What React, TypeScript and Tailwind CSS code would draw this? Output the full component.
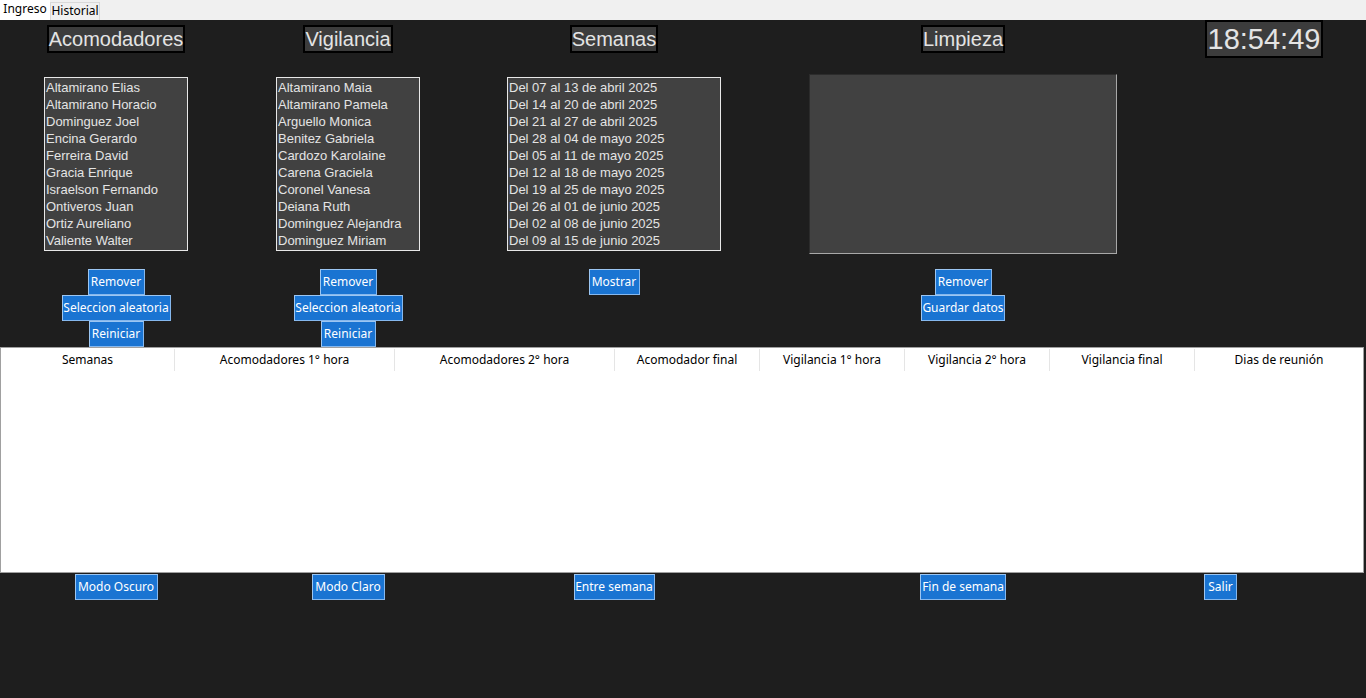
import React from 'react';

const acomodadores = [
  'Altamirano Elias',
  'Altamirano Horacio',
  'Dominguez Joel',
  'Encina Gerardo',
  'Ferreira David',
  'Gracia Enrique',
  'Israelson Fernando',
  'Ontiveros Juan',
  'Ortiz Aureliano',
  'Valiente Walter',
];

const vigilancia = [
  'Altamirano Maia',
  'Altamirano Pamela',
  'Arguello Monica',
  'Benitez Gabriela',
  'Cardozo Karolaine',
  'Carena Graciela',
  'Coronel Vanesa',
  'Deiana Ruth',
  'Dominguez Alejandra',
  'Dominguez Miriam',
];

const semanas = [
  'Del 07 al 13 de abril 2025',
  'Del 14 al 20 de abril 2025',
  'Del 21 al 27 de abril 2025',
  'Del 28 al 04 de mayo 2025',
  'Del 05 al 11 de mayo 2025',
  'Del 12 al 18 de mayo 2025',
  'Del 19 al 25 de mayo 2025',
  'Del 26 al 01 de junio 2025',
  'Del 02 al 08 de junio 2025',
  'Del 09 al 15 de junio 2025',
];

const columnas = [
  { label: 'Semanas', w: 'w-[174px]' },
  { label: 'Acomodadores 1° hora', w: 'w-[220px]' },
  { label: 'Acomodadores 2° hora', w: 'w-[220px]' },
  { label: 'Acomodador final', w: 'w-[145px]' },
  { label: 'Vigilancia 1° hora', w: 'w-[145px]' },
  { label: 'Vigilancia 2° hora', w: 'w-[145px]' },
  { label: 'Vigilancia final', w: 'w-[145px]' },
  { label: 'Dias de reunión', w: 'flex-1' },
];

const arial = "font-['Liberation_Sans',Arial,sans-serif]";
const segoe = "font-['Noto_Sans',sans-serif]";

function Heading({ children }: { children: React.ReactNode }) {
  return (
    <div className={`mt-[5px] border-2 border-black bg-[#3c3c3c] text-[20px] leading-[24px] text-[#e4e4e4] ${arial}`}>
      {children}
    </div>
  );
}

function ListBox({ items, width }: { items: string[]; width: string }) {
  return (
    <div className={`mt-[24px] h-[174px] ${width} overflow-hidden border border-[#e8e8e8] bg-[#414141] pl-[1px] pt-[1px] ${arial} text-[13px] leading-[17px] text-[#e4e4e4]`}>
      {items.map((it) => (
        <div key={it} className="whitespace-nowrap">
          {it}
        </div>
      ))}
    </div>
  );
}

function Btn({ children, w }: { children: React.ReactNode; w: string }) {
  return (
    <button
      className={`flex h-[26px] ${w} items-center justify-center border border-[#86b8ee] border-t-[#9cc6f2] border-l-[#9cc6f2] bg-[#1a74d2] text-[12px] leading-none text-white ${segoe}`}
    >
      {children}
    </button>
  );
}

export default function App() {
  return (
    <div className="flex h-[698px] w-[1366px] flex-col overflow-hidden bg-[#1e1e1e]">
      {/* tab bar */}
      <div className={`flex h-[20px] items-end bg-[#f0f0f0] text-[12px] text-black ${segoe}`}>
        <div className="flex h-[20px] w-[50px] items-center justify-center bg-white pb-[3px]">Ingreso</div>
        <div className="flex h-[18px] w-[50px] items-center justify-center border border-b-0 border-[#d9d9d9] bg-[#f0f0f0] pb-[1px]">
          Historial
        </div>
      </div>

      {/* top section */}
      <div className="grid h-[327px] grid-cols-[232px_232px_300px_398px_204px]">
        <div className="flex flex-col items-center">
          <Heading>Acomodadores</Heading>
          <ListBox items={acomodadores} width="w-[144px]" />
          <div className="mt-[18px] flex flex-col items-center">
            <Btn w="w-[57px]">Remover</Btn>
            <Btn w="w-[109px]">Seleccion aleatoria</Btn>
            <Btn w="w-[55px]">Reiniciar</Btn>
          </div>
        </div>

        <div className="flex flex-col items-center">
          <Heading>Vigilancia</Heading>
          <ListBox items={vigilancia} width="w-[144px]" />
          <div className="mt-[18px] flex flex-col items-center">
            <Btn w="w-[57px]">Remover</Btn>
            <Btn w="w-[109px]">Seleccion aleatoria</Btn>
            <Btn w="w-[55px]">Reiniciar</Btn>
          </div>
        </div>

        <div className="flex flex-col items-center">
          <Heading>Semanas</Heading>
          <ListBox items={semanas} width="w-[214px]" />
          <div className="mt-[18px] flex flex-col items-center">
            <Btn w="w-[51px]">Mostrar</Btn>
          </div>
        </div>

        <div className="flex flex-col items-center">
          <Heading>Limpieza</Heading>
          <div className="mt-[21px] h-[180px] w-[308px] border border-[#a8a8a8] border-t-[#2c2c2c] border-l-[#2c2c2c] bg-[#414141]" />
          <div className="mt-[15px] flex flex-col items-center">
            <Btn w="w-[57px]">Remover</Btn>
            <Btn w="w-[84px]">Guardar datos</Btn>
          </div>
        </div>

        <div className="flex flex-col items-center">
          <div className={`h-[38px] border-2 border-black bg-[#3c3c3c] px-[1px] text-[29px] leading-[34px] text-[#e4e4e4] ${arial}`}>
            18:54:49
          </div>
        </div>
      </div>

      {/* table */}
      <div className="mr-[2px] h-[226px] border border-[#a0a0a0] bg-white">
        <div className={`flex h-[24px] items-center text-[12px] text-black ${segoe}`}>
          {columnas.map((c, i) => (
            <div
              key={c.label}
              className={`${c.w} flex h-[22px] items-center justify-center ${i < columnas.length - 1 ? 'border-r border-[#e5e5e5]' : ''}`}
            >
              {c.label}
            </div>
          ))}
        </div>
      </div>

      {/* bottom buttons */}
      <div className="grid grid-cols-[232px_232px_300px_398px_204px] pt-[1px]">
        <div className="flex justify-center">
          <Btn w="w-[83px]">Modo Oscuro</Btn>
        </div>
        <div className="flex justify-center">
          <Btn w="w-[73px]">Modo Claro</Btn>
        </div>
        <div className="flex justify-center">
          <Btn w="w-[81px]">Entre semana</Btn>
        </div>
        <div className="flex justify-center">
          <Btn w="w-[86px]">Fin de semana</Btn>
        </div>
        <div className="flex justify-start pl-[42px]">
          <Btn w="w-[33px]">Salir</Btn>
        </div>
      </div>
    </div>
  );
}
